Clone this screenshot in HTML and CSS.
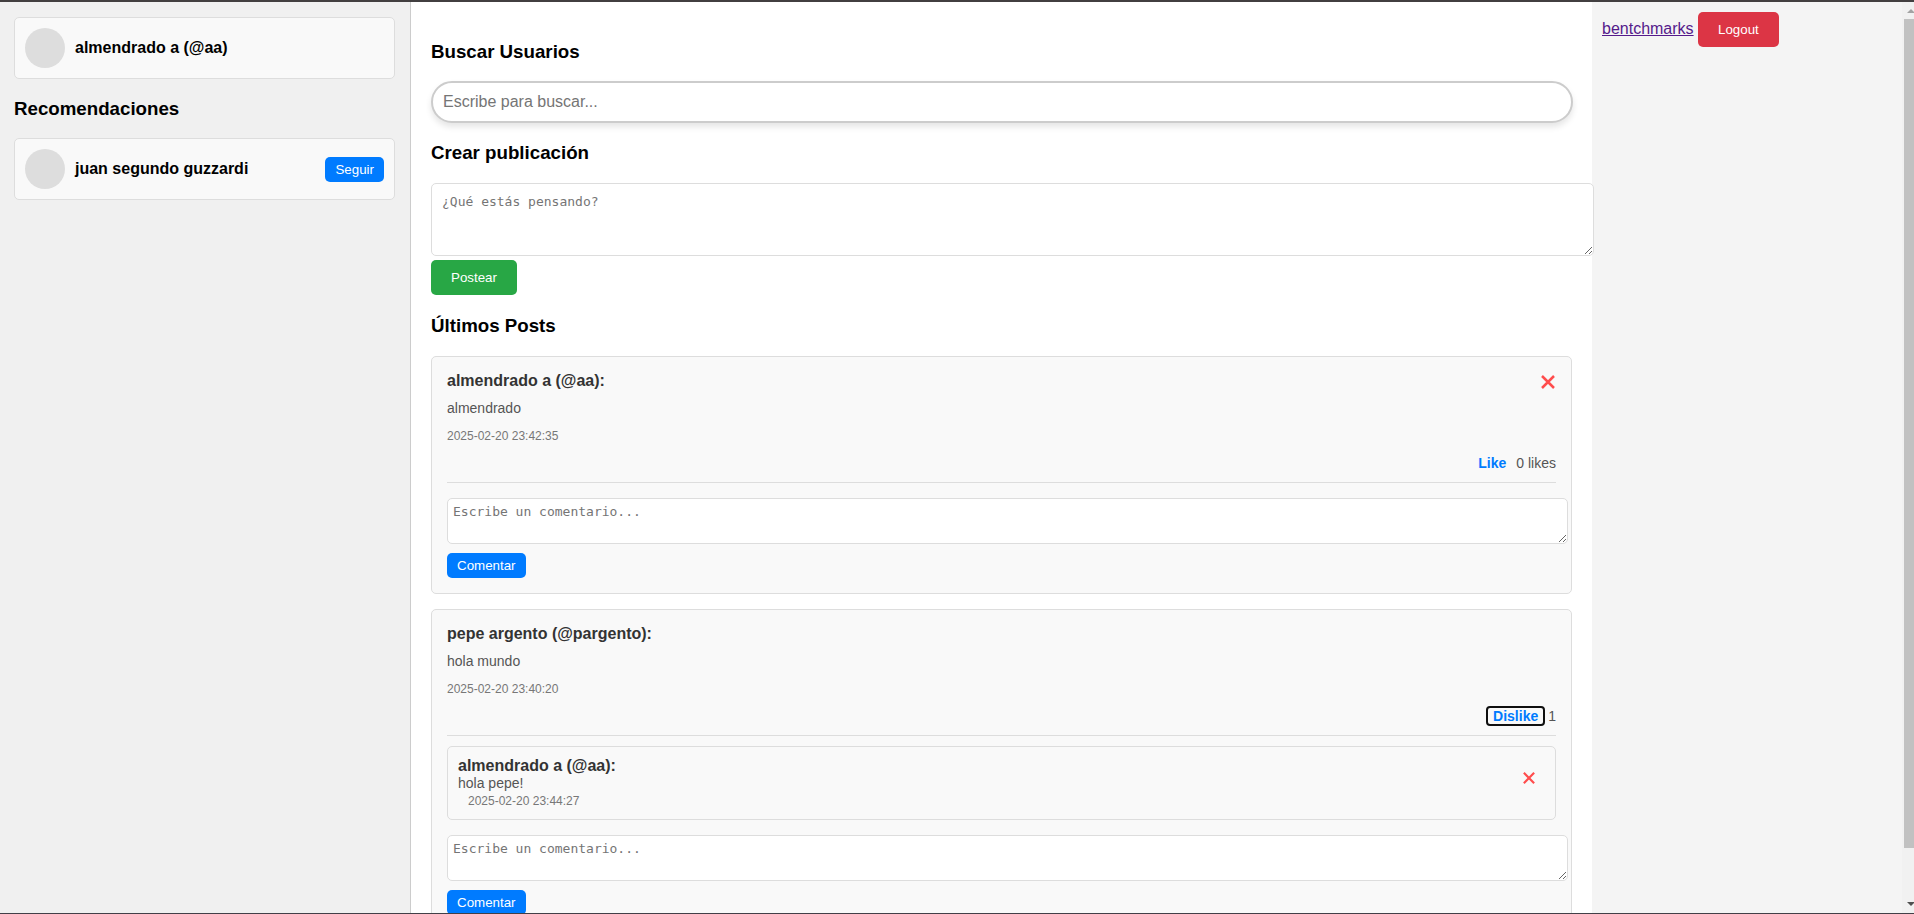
FILE: index.html
```
<!DOCTYPE html>
<html lang="es">

<head>
    <meta charset="UTF-8">
    <meta name="viewport" content="width=device-width, initial-scale=1.0">
    <title>Inicio</title>
    <link rel="stylesheet" href="styles.css">
</head>

<body>
    <div class="container">
        <aside class="sidebar">
            <div class="user-card">
                <div class="avatar"></div>
                <strong>almendrado a (@aa)</strong>
            </div>
            <h3>Recomendaciones</h3>
            <div class="user-card">
                <div class="avatar"></div>
                <strong>juan segundo guzzardi</strong>
                <button type="button" class="btn-small">Seguir</button>
            </div>
        </aside>

        <main class="feed">
            <h3><label for="search">Buscar Usuarios</label></h3>
            <input type="text" id="search" class="search" placeholder="Escribe para buscar...">

            <h3><label for="new-post">Crear publicación</label></h3>
            <form class="post-form">
                <textarea id="new-post" placeholder="¿Qué estás pensando?"></textarea>
                <button type="button" class="btn btn-post">Postear</button>
            </form>

            <h3>Últimos Posts</h3>
            <div class="posts">
                <article class="post">
                    <div class="post-header">
                        <strong>almendrado a (@aa):</strong>
                        <button type="button" class="delete" aria-label="Eliminar post">
                            <svg width="14" height="14" viewBox="0 0 14 14"><path d="M1 1L13 13M13 1L1 13" /></svg>
                        </button>
                    </div>
                    <p>almendrado</p>
                    <div class="date-row"><span class="date">2025-02-20 23:42:35</span></div>
                    <div class="likes">
                        <button type="button" class="like">Like</button>
                        <span>0 likes</span>
                    </div>
                    <form class="comment-form">
                        <textarea placeholder="Escribe un comentario..." aria-label="Comentario"></textarea>
                        <button type="button" class="btn-small">Comentar</button>
                    </form>
                </article>

                <article class="post">
                    <div class="post-header">
                        <strong>pepe argento (@pargento):</strong>
                    </div>
                    <p>hola mundo</p>
                    <div class="date-row"><span class="date">2025-02-20 23:40:20</span></div>
                    <div class="likes">
                        <button type="button" class="like active">Dislike</button>
                        <span>1</span>
                    </div>
                    <div class="comment">
                        <div class="comment-body">
                            <strong>almendrado a (@aa):</strong>
                            <p>hola pepe!</p>
                            <div class="date-row"><span class="date">2025-02-20 23:44:27</span></div>
                        </div>
                        <button type="button" class="delete" aria-label="Eliminar comentario">
                            <svg width="12" height="12" viewBox="0 0 14 14"><path d="M1 1L13 13M13 1L1 13" /></svg>
                        </button>
                    </div>
                    <form class="comment-form">
                        <textarea placeholder="Escribe un comentario..." aria-label="Comentario"></textarea>
                        <button type="button" class="btn-small">Comentar</button>
                    </form>
                </article>
            </div>
        </main>

        <nav class="menu">
            <a href="#">bentchmarks</a>
            <button type="button" class="btn btn-logout">Logout</button>
        </nav>

        <div class="scrollbar">
            <svg width="12" height="17" viewBox="0 0 12 17"><path d="M5 11L9 7L13 11Z" fill="#a3a3a3" /></svg>
            <div class="thumb"></div>
            <svg width="12" height="17" viewBox="0 0 12 17"><path d="M5 6L9 10L13 6Z" fill="#505050" /></svg>
        </div>
    </div>
</body>

</html>
```
FILE: styles.css
```
* {
    box-sizing: border-box;
}

body {
    font-family: "Liberation Sans", Arial, sans-serif;
    font-size: 16px;
    line-height: 18px;
    margin: 0;
    background: #f4f4f4;
}

h3 {
    line-height: 22px;
    margin: 19px 0 18px;
}

p {
    margin: 0;
}

.container {
    display: flex;
    height: 100vh;
    overflow: hidden;
    border-top: 2px solid #423f40;
    border-bottom: 1px solid #423f47;
}

/* left column */
.sidebar {
    flex: 0 0 411px;
    padding: 15px 15px 15px 14px;
    background: #f0f0f0;
    border-right: 1px solid #ccc;
}

.user-card {
    display: flex;
    align-items: center;
    gap: 10px;
    padding: 10px;
    background: #f9f9f9;
    border: 1px solid #ddd;
    border-radius: 5px;
}

.avatar {
    width: 40px;
    height: 40px;
    border-radius: 50%;
    background: #ddd;
}

.user-card .btn-small {
    margin-left: auto;
}

/* buttons */
button {
    font-family: inherit;
    border: none;
    cursor: pointer;
}

.btn,
.btn-small {
    line-height: 15px;
    color: #fff;
    border-radius: 5px;
}

.btn {
    padding: 10px 20px;
}

.btn-small {
    padding: 5px 10px;
    background: #007bff;
}

.btn-post {
    background: #28a745;
}

.btn-logout {
    background: #dc3545;
}

/* feed */
.feed {
    flex: 1;
    min-width: 0;
    padding: 20px;
    background: #fff;
}

.search {
    box-sizing: content-box;
    display: block;
    width: 98%;
    height: 18px;
    padding: 10px;
    font-family: inherit;
    font-size: 16px;
    border: 2px solid #ccc;
    border-radius: 25px;
    box-shadow: 0 4px 6px rgba(0, 0, 0, 0.1);
}

textarea {
    box-sizing: content-box;
    display: block;
    width: 100%;
    font-family: "DejaVu Sans Mono", monospace;
    font-size: 13px;
    line-height: 16px;
    background: #fff;
    border: 1px solid #ddd;
    border-radius: 5px;
}

.post-form {
    margin: 19px 0 20px;
}

/* wider than the column, so it goes over the menu background */
.post-form textarea {
    position: relative;
    height: 51px;
    padding: 10px;
    margin-bottom: 4px;
}

.posts {
    margin-top: 19px;
}

.post {
    padding: 15px;
    margin-bottom: 15px;
    background: #f9f9f9;
    border: 1px solid #ddd;
    border-radius: 5px;
}

.post-header {
    display: flex;
    justify-content: space-between;
    align-items: center;
    height: 18px;
    margin-bottom: 10px;
}

.post strong {
    color: #333;
}

.post p {
    font-size: 14px;
    line-height: 16px;
    color: #555;
}

.date-row {
    height: 18px;
}

.date {
    font-size: 12px;
    color: #777;
}

.post > .date-row {
    margin: 10px 0;
}

.delete {
    display: flex;
    padding: 2px 1px 0;
    background: none;
}

.delete path {
    stroke: #ff4d4d;
    stroke-width: 2.5;
}

.likes {
    display: flex;
    justify-content: flex-end;
    align-items: center;
    gap: 4px;
    height: 29px;
    padding-bottom: 10px;
    font-size: 14px;
    color: #555;
    border-bottom: 1px solid #ddd;
}

.like {
    padding: 1px 6px;
    font-size: 14px;
    font-weight: bold;
    line-height: 16px;
    color: #007bff;
    background: none;
    border-radius: 3px;
}

.like.active {
    outline: 2px solid #101010;
    outline-offset: -1px;
}

.comment {
    display: flex;
    justify-content: space-between;
    align-items: center;
    padding: 10px;
    margin-top: 10px;
    border: 1px solid #ddd;
    border-radius: 5px;
}

.comment .date {
    margin-left: 10px;
}

.comment .delete {
    padding: 0 10px 10px;
}

.comment-form {
    margin-top: 15px;
}

.comment-form textarea {
    height: 34px;
    padding: 5px;
    margin-bottom: 9px;
}

/* right column */
.menu {
    flex: 0 0 310px;
    padding: 10px;
}

.menu a {
    color: #551a8b;
}

.scrollbar {
    display: flex;
    flex-direction: column;
    flex: 0 0 12px;
    background: #f1f1f1;
}

.thumb {
    height: 91%;
    margin-left: 2px;
    margin-bottom: auto;
    background: #c1c1c1;
}
```
